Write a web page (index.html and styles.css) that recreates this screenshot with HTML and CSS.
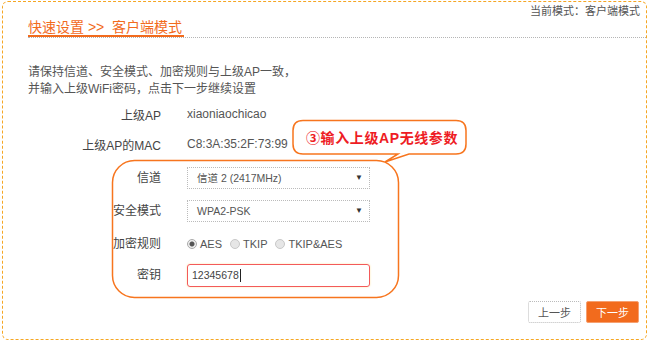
FILE: index.html
```html
<!DOCTYPE html>
<html lang="zh-CN">

<head>
    <meta charset="UTF-8">
    <title>快速设置 - 客户端模式</title>
    <link rel="stylesheet" href="styles.css">
</head>

<body>
    <div class="frame">
        <div class="mode">当前模式：客户端模式</div>

        <div class="title-bar">
            <span class="title">快速设置 &gt;&gt;&nbsp; 客户端模式</span>
        </div>

        <p class="tip">请保持信道、安全模式、加密规则与上级AP一致，<br>并输入上级WiFi密码，点击下一步继续设置</p>

        <div class="form">
            <div class="row info">
                <label>上级AP</label>
                <span class="value">xiaoniaochicao</span>
            </div>
            <div class="row info">
                <label>上级AP的MAC</label>
                <span class="value">C8:3A:35:2F:73:99</span>
            </div>
            <div class="row">
                <label>信道</label>
                <div class="select">信道 2 (2417MHz)<span class="arrow">▼</span></div>
            </div>
            <div class="row">
                <label>安全模式</label>
                <div class="select">WPA2-PSK<span class="arrow">▼</span></div>
            </div>
            <div class="row">
                <label>加密规则</label>
                <div class="radios">
                    <span class="radio checked"></span>AES
                    <span class="radio"></span>TKIP
                    <span class="radio"></span>TKIP&amp;AES
                </div>
            </div>
            <div class="row last">
                <label>密钥</label>
                <div class="pwd">12345678<span class="caret"></span></div>
            </div>
        </div>

        <div class="buttons">
            <button class="btn prev">上一步</button>
            <button class="btn next">下一步</button>
        </div>

        <!-- annotation drawn over the form -->
        <svg class="marks" width="649" height="341" viewBox="0 0 649 341">
            <rect x="112.5" y="160.5" width="286" height="137" rx="22" fill="none" stroke="#f7751e" stroke-width="1.5"/>
            <path d="M303 120.5 H456 Q466 120.5 466 130.5 V144 Q466 154 456 154 H409 L385 162 L398 154 H303 Q293 154 293 144 V130.5 Q293 120.5 303 120.5 Z"
                fill="#fff" stroke="#f7751e" stroke-width="1.5"/>
        </svg>
        <div class="callout">③输入上级AP无线参数</div>
    </div>
</body>

</html>
```

FILE: styles.css
```css
body {
    margin: 0;
    font-family: "Liberation Sans", "Noto Sans CJK SC", sans-serif;
    font-size: 12px;
    color: #555;
    background: #fff;
}

.frame {
    position: relative;
    box-sizing: border-box;
    width: 645px;
    height: 339px;
    margin: 1px 0 0 2px;
    border: 1px dashed #f5a623;
    border-radius: 6px;
}

.mode {
    text-align: right;
    font-size: 11px;
    line-height: 14px;
    height: 14px;
    color: #555;
    padding: 2px 6px 0 0;
}

.title-bar {
    margin: 1px 0 0 25px;
    border-bottom: 1px dotted #b5b5b5;
    height: 18px;
}

.title {
    display: inline-block;
    height: 16px;
    font-size: 14px;
    line-height: 16px;
    color: #f26b1d;
    border-bottom: 2px solid #f26b1d;
    padding-right: 2px;
}

.tip {
    margin: 26px 0 0 25px;
    line-height: 17px;
    color: #555;
}

.form {
    margin-top: 3px;
}

.row {
    display: flex;
    align-items: center;
    height: 33px;
}

.row.info {
    height: 30px;
}

.row.last {
    height: 30px;
}

.row label {
    width: 158px;
    text-align: right;
    margin-right: 26px;
    color: #444;
    line-height: 16px;
}

.value {
    color: #555;
    line-height: 16px;
    margin-top: -4px;
}

.select {
    position: relative;
    box-sizing: border-box;
    width: 183px;
    height: 22px;
    line-height: 20px;
    padding-left: 9px;
    border: 1px dotted #bbb;
    color: #555;
    font-size: 10.5px;
}

.arrow {
    position: absolute;
    right: 6px;
    top: 0;
    font-size: 8px;
    color: #333;
}

.radios {
    display: flex;
    align-items: center;
    font-size: 11px;
    color: #555;
}

.radio {
    width: 8px;
    height: 8px;
    border: 1px solid #c8c8c8;
    border-radius: 50%;
    background: #e6e6e6;
    margin: 0 3px 0 8px;
}

.radio:first-child {
    margin-left: 0;
}

.radio.checked {
    background: radial-gradient(circle, #555 0 2px, #eee 3px);
    border-color: #aaa;
}

.pwd {
    box-sizing: border-box;
    width: 183px;
    height: 23px;
    line-height: 21px;
    padding-left: 4px;
    border: 1px solid #f35a5a;
    border-radius: 3px;
    box-shadow: 0 0 2px #fde3a0;
    color: #444;
    font-size: 10.5px;
    display: flex;
    align-items: center;
}

.caret {
    display: inline-block;
    width: 1px;
    height: 13px;
    background: #222;
    margin-left: 1px;
}

.buttons {
    display: flex;
    justify-content: flex-end;
    gap: 5px;
    margin: 11px 7px 0 0;
}

.btn {
    width: 53px;
    height: 22px;
    font-family: "Liberation Sans", "Noto Sans CJK SC", sans-serif;
    font-size: 11px;
    border-radius: 2px;
    cursor: pointer;
    padding: 0;
}

.prev {
    background: #fff;
    border: 1px dotted #bbb;
    color: #555;
}

.next {
    background: #f26b1d;
    border: 1px solid #f6a070;
    color: #fff;
}

.marks {
    position: absolute;
    left: -3px;
    top: -2px;
    pointer-events: none;
}

.callout {
    position: absolute;
    left: 303px;
    top: 125px;
    font-size: 14px;
    font-weight: bold;
    line-height: 22px;
    color: #ee1c24;
    letter-spacing: 0.6px;
}
```
